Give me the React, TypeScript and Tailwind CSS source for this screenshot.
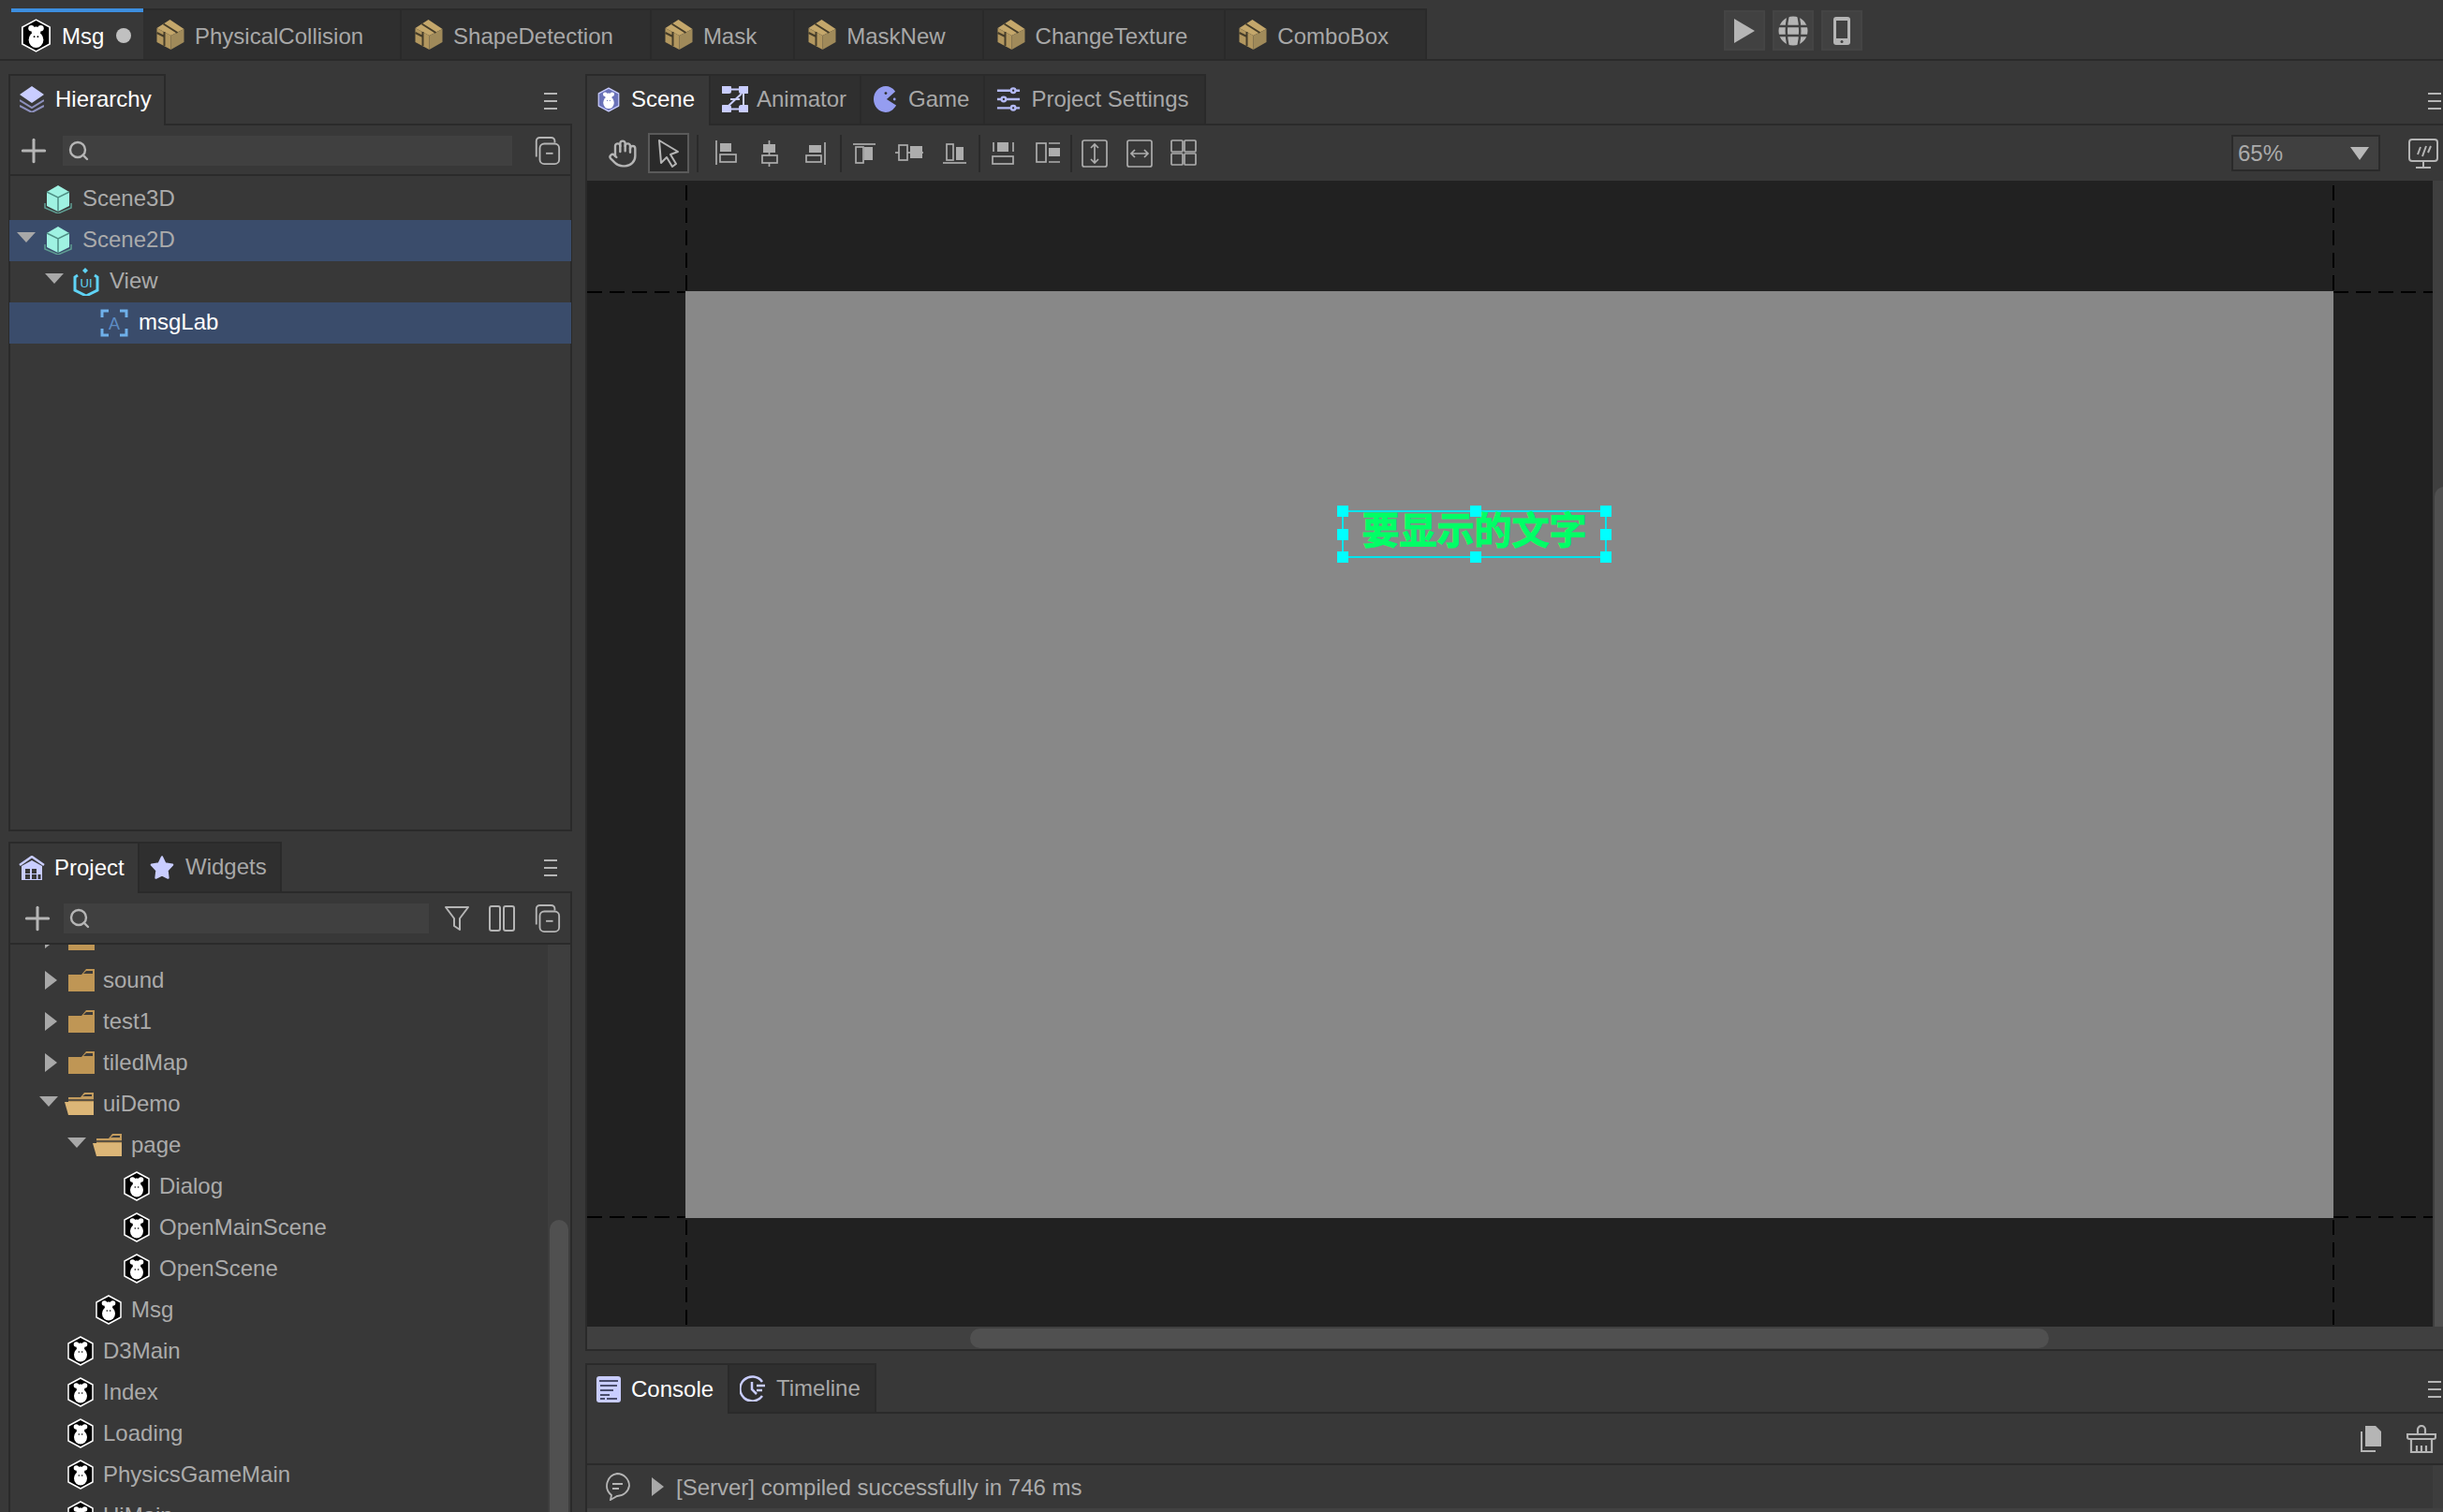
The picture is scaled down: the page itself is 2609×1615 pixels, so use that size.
import React from 'react';
import { Hand, Plus, Search } from 'lucide-react';

const ICON = '#b5b5b5';
const PERI = '#c9cdff';

const MonkeyHex = ({ w = 29, h = 32, fill = '#000', line = '#fff' }: { w?: number; h?: number; fill?: string; line?: string }) => (
  <svg width={w} height={h} viewBox="0 0 29 32" className="shrink-0">
    <path d="M14.5 1 27.5 8v16l-13 7-13-7V8z" fill={fill} stroke={line} strokeWidth="1.5" strokeLinejoin="round" />
    <circle cx="10" cy="9" r="2.8" fill="#fff" />
    <circle cx="19" cy="9" r="2.8" fill="#fff" />
    <circle cx="14.5" cy="12" r="4.4" fill="#fff" />
    <ellipse cx="14.5" cy="20" rx="7" ry="7.6" fill="#fff" />
    <circle cx="12.8" cy="17" r="0.8" fill={fill} />
    <circle cx="16.2" cy="17" r="0.8" fill={fill} />
  </svg>
);

const BoxIcon = () => (
  <svg width="30" height="32" viewBox="0 0 29 32" className="shrink-0">
    <path d="M0 9 14 0l15 10-14 7z" fill="#c4a76b" />
    <path d="M0 9l15 8v15L0 24z" fill="#b2975f" />
    <path d="M15 17l14-7v14l-14 8z" fill="#a08a5a" />
    <path d="M7 4.500l15 9.500M8 13v15M0 14l8 4" stroke="#453d2a" strokeWidth="2" fill="none" />
  </svg>
);

const CubeIcon = () => (
  <svg width="30" height="30" viewBox="0 0 30 30" className="shrink-0">
    <path d="M1 19v5l14 6 14-6v-5" fill="none" stroke="#5f9d92" strokeWidth="1.5" />
    <path d="M15 0 27 7v15l-12 6-12-6V7z" fill="#9ff2e2" />
    <path d="M3 7l12 6 12-6M15 13v15" fill="none" stroke="#4f8f85" strokeWidth="1.5" />
  </svg>
);

const UiIcon = () => (
  <svg width="28" height="30" viewBox="0 0 28 30" className="shrink-0">
    <path d="M13 0l3 3-3 3-3-3z" fill="#5fd3f5" />
    <path d="M5 8 2 10v14l12 6 12-6V10l-3-2" fill="none" stroke="#5fd3f5" strokeWidth="3" />
    <text x="14" y="21" textAnchor="middle" fontSize="13" fontFamily="Liberation Sans" fill="#5fd3f5">UI</text>
  </svg>
);

const LabelIcon = () => (
  <svg width="30" height="30" viewBox="0 0 30 30" className="shrink-0">
    <path d="M9 2H2v7M21 2h7v7M2 21v7h7M28 21v7h-7" fill="none" stroke="#6fb0ea" strokeWidth="3" />
    <text x="15" y="22" textAnchor="middle" fontSize="18" fontFamily="Liberation Sans" fill="#5d8cc4">A</text>
  </svg>
);

const FolderClosed = () => (
  <svg width="28" height="24" viewBox="0 0 28 24" className="shrink-0">
    <path d="M0 6h14l5-6h9v24H0z" fill="#bf9655" />
    <path d="M16 5l3-3h7v3z" fill="#3b3b3b" />
  </svg>
);

const FolderOpen = () => (
  <svg width="32" height="24" viewBox="0 0 32 24" className="shrink-0">
    <path d="M4 5h13l4-5h10v24H4z" fill="#c39c5e" />
    <path d="M19 4l3-2h7v2z" fill="#3b3b3b" />
    <path d="M0 10h31v14H4z" fill="#dcb677" />
    <path d="M3 8h28" stroke="#3b3b3b" strokeWidth="1.5" />
  </svg>
);

const Hamburger = () => (
  <svg width="14" height="18" viewBox="0 0 14 18" className="shrink-0">
    <path d="M0 1h14M0 9h14M0 17h14" stroke={ICON} strokeWidth="2.2" />
  </svg>
);

const CollapseIcon = () => (
  <svg width="30" height="30" viewBox="0 0 32 32" fill="none" stroke={ICON} strokeWidth="2">
    <path d="M4 23V5a4 4 0 0 1 4-4h13a4 4 0 0 1 4 4v2" />
    <rect x="8" y="8" width="22" height="23" rx="5" />
    <path d="M15 19h8" />
  </svg>
);

const Arrow = ({ down }: { down?: boolean }) =>
  down ? (
    <svg width="20" height="11" viewBox="0 0 20 11" className="shrink-0"><path d="M0 0h20L10 11z" fill="#a8a8a8" /></svg>
  ) : (
    <svg width="13" height="20" viewBox="0 0 13 20" className="shrink-0"><path d="M0 0l13 10L0 20z" fill="#a8a8a8" /></svg>
  );

const AlignIcon = ({ children, w = 30 }: { children: React.ReactNode; w?: number }) => (
  <svg width={w} height="30" viewBox="0 0 30 30" fill="none" stroke="#adadad" strokeWidth="1.7" className="shrink-0">
    {children}
  </svg>
);

const Sep = ({ className }: { className: string }) => <div className={`h-[40px] w-[2px] bg-[#2a2a2a] ${className}`} />;

const hierarchy = [
  { label: 'Scene3D', pad: 'pl-[37px]', icon: <CubeIcon /> },
  { label: 'Scene2D', pad: 'pl-[8px]', arrowGap: 'mr-[9px]', icon: <CubeIcon />, down: true, selected: true },
  { label: 'View', pad: 'pl-[38px]', arrowGap: 'mr-[10px]', icon: <UiIcon />, down: true },
  { label: 'msgLab', pad: 'pl-[97px]', icon: <LabelIcon />, selected: true, white: true },
];

const files = [
  { label: '', pad: 'pl-[37px]', icon: <FolderClosed />, arrow: true },
  { label: 'sound', pad: 'pl-[37px]', icon: <FolderClosed />, arrow: true },
  { label: 'test1', pad: 'pl-[37px]', icon: <FolderClosed />, arrow: true },
  { label: 'tiledMap', pad: 'pl-[37px]', icon: <FolderClosed />, arrow: true },
  { label: 'uiDemo', pad: 'pl-[31px]', icon: <FolderOpen />, down: true },
  { label: 'page', pad: 'pl-[61px]', icon: <FolderOpen />, down: true },
  { label: 'Dialog', pad: 'pl-[120px]', icon: <MonkeyHex w={30} /> },
  { label: 'OpenMainScene', pad: 'pl-[120px]', icon: <MonkeyHex w={30} /> },
  { label: 'OpenScene', pad: 'pl-[120px]', icon: <MonkeyHex w={30} /> },
  { label: 'Msg', pad: 'pl-[90px]', icon: <MonkeyHex w={30} /> },
  { label: 'D3Main', pad: 'pl-[60px]', icon: <MonkeyHex w={30} /> },
  { label: 'Index', pad: 'pl-[60px]', icon: <MonkeyHex w={30} /> },
  { label: 'Loading', pad: 'pl-[60px]', icon: <MonkeyHex w={30} /> },
  { label: 'PhysicsGameMain', pad: 'pl-[60px]', icon: <MonkeyHex w={30} /> },
  { label: 'UiMain', pad: 'pl-[60px]', icon: <MonkeyHex w={30} /> },
];

const docTabs = ['PhysicalCollision', 'ShapeDetection', 'Mask', 'MaskNew', 'ChangeTexture', 'ComboBox'];

const Handle = ({ className }: { className: string }) => <div className={`absolute h-[12px] w-[12px] bg-[#00ffff] ${className}`} />;

const App: React.FC = () => {
  return (
    <div className="flex h-[1615px] w-[2609px] flex-col overflow-hidden bg-[#383838] font-['Liberation_Sans',sans-serif] text-[24px] leading-none">
      {/* Document tabs */}
      <div className="flex h-[65px] shrink-0 border-b-2 border-[#2a2a2a] pt-[9px] pl-[12px]">
        <div className="flex h-full border-t-[4px] border-[#3d8fe0] pr-[2px]">
          <div className="flex w-[139px] items-center bg-[#383838] pl-[10px] text-white">
            <MonkeyHex w={33} h={36} />
            <span className="ml-[11px] pt-[2px]">Msg</span>
            <div className="ml-[13px] h-[16px] w-[16px] rounded-full bg-[#c0c0c0]" />
          </div>
        </div>
        {docTabs.map((t) => (
          <div key={t} className="flex h-full items-center gap-[11px] border-t-2 border-r-2 border-[#2a2a2a] bg-[#2f2f2f] pr-[39px] pl-[14px] text-[#a8a8a8]">
            <BoxIcon />
            <span className="pt-[3px]">{t}</span>
          </div>
        ))}
        <div className="ml-[317px] flex h-[43px] gap-[8px] pt-[2px]">
          <div className="flex h-[43px] w-[44px] items-center justify-center border-2 border-[#444444] bg-[#414141]">
            <svg width="22" height="26" viewBox="0 0 22 26"><path d="M0 0l22 13L0 26z" fill={ICON} /></svg>
          </div>
          <div className="flex h-[43px] w-[44px] items-center justify-center border-2 border-[#444444] bg-[#414141]">
            <svg width="32" height="32" viewBox="0 0 32 32">
              <circle cx="16" cy="16" r="15.5" fill={ICON} />
              <path d="M0 11h32M0 21h32M10.5 0Q7 16 10.5 32M21.5 0Q25 16 21.5 32" stroke="#414141" strokeWidth="2.4" fill="none" />
            </svg>
          </div>
          <div className="flex h-[43px] w-[44px] items-center justify-center border-2 border-[#444444] bg-[#414141]">
            <svg width="18" height="30" viewBox="0 0 18 30">
              <rect width="18" height="30" rx="3" fill={ICON} />
              <rect x="3" y="4" width="12" height="19" fill="#414141" />
              <circle cx="9" cy="26.5" r="1.5" fill="#414141" />
            </svg>
          </div>
        </div>
      </div>

      <div className="flex min-h-0 flex-1 pt-[14px] pl-[9px]">
        {/* Left column */}
        <div className="flex w-[602px] shrink-0 flex-col">
          <div className="flex h-[809px] shrink-0 flex-col">
            <div className="flex h-[55px] shrink-0 items-center border-b-2 border-[#2a2a2a]">
              <div className="relative -mb-[2px] flex h-[calc(100%+2px)] w-[168px] items-center gap-[12px] border-x-2 border-t-2 border-[#2a2a2a] bg-[#383838] pb-[3px] pl-[10px] text-white">
                <svg width="26" height="28" viewBox="0 0 26 28">
                  <path d="M13 0l13 9-13 9L0 9z" fill={PERI} />
                  <path d="M0 15l13 8 13-8M0 21l13 7 13-7" fill="none" stroke="#8d90bd" strokeWidth="2" />
                </svg>
                <span>Hierarchy</span>
              </div>
              <div className="mt-[4px] mr-[16px] ml-auto"><Hamburger /></div>
            </div>
            <div className="flex min-h-0 flex-1 flex-col border-x-2 border-b-2 border-[#2a2a2a]">
              <div className="flex h-[54px] shrink-0 items-center border-b-2 border-[#2a2a2a] pt-[2px]">
                <Plus size={40} color={ICON} strokeWidth={1.8} className="ml-[5px]" />
                <div className="ml-[11px] flex h-[32px] w-[480px] items-center bg-[#404040] pl-[5px]">
                  <Search size={24} color={ICON} strokeWidth={2.4} />
                </div>
                <div className="ml-[22px]"><CollapseIcon /></div>
              </div>
              <div className="-mx-px pt-[3px]">
                {hierarchy.map((r) => (
                  <div key={r.label} className={`flex h-[44px] items-center ${r.pad} ${r.selected ? 'bg-[#3a4c6b]' : ''}`}>
                    {r.down && <div className={`-mt-[8px] ${r.arrowGap}`}><Arrow down /></div>}
                    {r.icon}
                    <span className={`ml-[11px] pb-[2px] ${r.white ? 'text-white' : 'text-[#ababab]'}`}>{r.label}</span>
                  </div>
                ))}
              </div>
            </div>
          </div>

          <div className="mt-[11px] flex min-h-0 flex-1 flex-col">
            <div className="flex h-[55px] shrink-0 items-center border-b-2 border-[#2a2a2a]">
              <div className="relative -mb-[2px] flex h-[calc(100%+2px)] w-[140px] items-center gap-[10px] border-x-2 border-t-2 border-[#2a2a2a] bg-[#383838] pb-[2px] pl-[9px] text-white">
                <svg width="28" height="26" viewBox="0 0 28 26">
                  <path d="M1 10 14 1l13 9" fill="none" stroke={PERI} strokeWidth="2.5" />
                  <path d="M3 11 14 5l11 6v15H3z" fill={PERI} />
                  <path d="M7 14h5v5H7zM14 14h5v5h-5zM7 20h5v5H7zM14 20h5v5h-5zM20.500 20h3v5h-3z" fill="#383838" />
                </svg>
                <span>Project</span>
              </div>
              <div className="flex h-full w-[152px] items-center gap-[12px] border-t-2 border-r-2 border-[#2a2a2a] bg-[#2f2f2f] pb-[1px] pl-[11px] text-[#a8a8a8]">
                <svg width="26" height="25" viewBox="0 0 27 27">
                  <path d="M13.500 1.500l3.500 7.500 8.500 1.500-6 6.500 1 8.500-7-3.500-7 3.500 1-8.500-6-6.500 8.500-1.500z" fill={PERI} stroke={PERI} strokeWidth="2.500" strokeLinejoin="round" />
                </svg>
                <span>Widgets</span>
              </div>
              <div className="mt-[3px] mr-[16px] ml-auto"><Hamburger /></div>
            </div>
            <div className="flex min-h-0 flex-1 flex-col border-x-2 border-[#2a2a2a]">
              <div className="flex h-[55px] shrink-0 items-center border-b-2 border-[#2a2a2a]">
                <Plus size={40} color={ICON} strokeWidth={1.8} className="ml-[9px]" />
                <div className="ml-[8px] flex h-[32px] w-[390px] items-center bg-[#404040] pl-[5px]">
                  <Search size={24} color={ICON} strokeWidth={2.4} />
                </div>
                <svg width="26" height="26" viewBox="0 0 26 26" fill="none" stroke={ICON} strokeWidth="2" className="ml-[17px]">
                  <path d="M1 1h24l-9 12v12l-6-4v-8z" strokeLinejoin="round" />
                </svg>
                <svg width="28" height="28" viewBox="0 0 28 28" fill="none" stroke={ICON} strokeWidth="2" className="ml-[21px]">
                  <rect x="1" y="1" width="11" height="26" rx="2" />
                  <rect x="16" y="1" width="11" height="26" rx="2" />
                </svg>
                <div className="ml-[19px]"><CollapseIcon /></div>
              </div>
              <div className="relative min-h-0 flex-1 overflow-hidden">
                <div className="-mt-[28px]">
                  {files.map((r) => (
                    <div key={r.pad + r.label} className={`flex h-[44px] items-center ${r.pad}`}>
                      {r.arrow && <div className="mr-[12px]"><Arrow /></div>}
                      {r.down && <div className="-mt-[5px] mr-[7px]"><Arrow down /></div>}
                      {r.icon}
                      <span className="ml-[9px] text-[#ababab]">{r.label}</span>
                    </div>
                  ))}
                </div>
                <div className="absolute top-0 right-0 bottom-0 w-[24px] bg-[#3e3e3e]">
                  <div className="absolute top-[294px] right-[2px] bottom-0 left-[2px] rounded-t-[10px] bg-[#505050]" />
                </div>
              </div>
            </div>
          </div>
        </div>

        {/* Right column */}
        <div className="ml-[14px] flex min-w-0 flex-1 flex-col">
          <div className="flex h-[1364px] shrink-0 flex-col">
            <div className="flex h-[55px] shrink-0 items-center border-b-2 border-[#2a2a2a]">
              <div className="relative -mb-[2px] flex h-[calc(100%+2px)] w-[134px] items-center gap-[12px] border-x-2 border-t-2 border-[#2a2a2a] bg-[#383838] pb-[3px] pl-[11px] text-white">
                <MonkeyHex w={24} h={29} fill="#6a72b8" line="#c9cdff" />
                <span>Scene</span>
              </div>
              <div className="flex h-full items-center gap-[9px] border-t-2 border-r-2 border-[#2a2a2a] bg-[#2f2f2f] pr-[14px] pb-[2px] pl-[12px] text-[#a8a8a8]">
                <svg width="28" height="28" viewBox="0 0 28 28" fill="none" stroke={PERI} strokeWidth="2">
                  <rect x="0" y="0" width="9" height="7" rx="1.500" fill={PERI} />
                  <rect x="19" y="0" width="9" height="7" rx="1.500" fill={PERI} />
                  <rect x="0" y="21" width="9" height="7" rx="1.500" fill={PERI} />
                  <rect x="19" y="21" width="9" height="7" rx="1.500" fill={PERI} />
                  <path d="M9 3.500h10M23 7v14M19 24.500H9M21 8 7 21M9 14h10" />
                </svg>
                <span>Animator</span>
              </div>
              <div className="flex h-full items-center gap-[12px] border-t-2 border-r-2 border-[#2a2a2a] bg-[#2f2f2f] pr-[15px] pb-[2px] pl-[13px] text-[#a8a8a8]">
                <svg width="25" height="28" viewBox="0 0 27 30">
                  <path d="M14 0C6 0 0 7 0 15s6 15 14 15c5 0 9-3 12-8L15 15 25 6C22 2 18 0 14 0z" fill="#959df0" />
                  <circle cx="14" cy="8" r="1.500" fill="#2f2f2f" />
                  <circle cx="24" cy="15" r="1.500" fill="#959df0" />
                </svg>
                <span>Game</span>
              </div>
              <div className="flex h-full items-center gap-[11px] border-t-2 border-r-2 border-[#2a2a2a] bg-[#2f2f2f] pr-[16px] pb-[2px] pl-[12px] text-[#a8a8a8]">
                <svg width="26" height="26" viewBox="0 0 26 28" fill="none" stroke="#b4b9f5" strokeWidth="2.5">
                  <path d="M0 4h16M21 4h5M0 14h5M10 14h16M0 24h16M21 24h5" />
                  <circle cx="18.500" cy="4" r="2.500" />
                  <circle cx="7.500" cy="14" r="2.500" />
                  <circle cx="18.500" cy="24" r="2.500" />
                </svg>
                <span>Project Settings</span>
              </div>
              <div className="mt-[4px] mr-[2px] ml-auto"><Hamburger /></div>
            </div>

            <div className="flex min-h-0 flex-1 flex-col border-b-2 border-l-2 border-[#2a2a2a]">
              {/* Scene toolbar */}
              <div className="flex h-[59px] shrink-0 items-center pl-[22px]">
                <Hand size={32} color={ICON} strokeWidth={1.8} />
                <div className="ml-[11px] flex h-[43px] w-[44px] items-center justify-center border-2 border-[#5a5a5a] bg-[#2a2a2a]">
                  <svg width="22" height="30" viewBox="0 0 22 30" fill="none" stroke={ICON} strokeWidth="2" strokeLinejoin="round">
                    <path d="M1 1l2 24 6-6 6 10 4-3-6-10 8-3z" />
                  </svg>
                </div>
                <Sep className="ml-[8px] mr-[14px]" />
                <div className="flex items-center gap-[18px]">
                  <AlignIcon><path d="M5 1v26" /><rect x="9" y="4" width="12" height="9" fill="#adadad" stroke="none" /><rect x="9" y="16" width="17" height="8" /></AlignIcon>
                  <AlignIcon><path d="M13.500 1v28" /><rect x="7" y="5" width="13" height="9" fill="#adadad" stroke="none" /><rect x="6" y="17" width="16" height="8" fill="#383838" /></AlignIcon>
                  <AlignIcon><path d="M25 3v24" /><rect x="8" y="6" width="13" height="8" fill="#adadad" stroke="none" /><rect x="5" y="17" width="16" height="7" /></AlignIcon>
                </div>
                <Sep className="ml-[11px] mr-[9px]" />
                <div className="flex items-center gap-[18px]">
                  <AlignIcon><path d="M3 5h24" /><rect x="6" y="8" width="8" height="17" /><rect x="15" y="8" width="9" height="14" fill="#adadad" stroke="none" /></AlignIcon>
                  <AlignIcon><path d="M0 14h30" /><rect x="4" y="6" width="9" height="16" fill="#383838" /><rect x="16" y="7" width="13" height="13" fill="#adadad" stroke="none" /></AlignIcon>
                  <AlignIcon><path d="M3 25h25" /><rect x="7" y="5" width="7" height="17" /><rect x="17" y="8" width="8" height="14" fill="#adadad" stroke="none" /></AlignIcon>
                </div>
                <Sep className="ml-[11px] mr-[9px]" />
                <div className="flex items-center gap-[18px]">
                  <AlignIcon><path d="M5 3v10M26 3v10" /><rect x="9" y="3" width="12" height="10" fill="#adadad" stroke="none" /><rect x="4" y="18" width="22" height="8" /></AlignIcon>
                  <AlignIcon><path d="M16 4h12M16 24h12" /><rect x="16" y="9" width="12" height="9" fill="#adadad" stroke="none" /><rect x="3" y="4" width="10" height="20" /></AlignIcon>
                </div>
                <Sep className="ml-[9px] mr-[9px]" />
                <div className="flex items-center gap-[18px]">
                  <AlignIcon><rect x="2" y="1" width="26" height="28" rx="2" /><path d="M15 5v20M11 9l4-4 4 4M11 21l4 4 4-4" /></AlignIcon>
                  <AlignIcon><rect x="2" y="1" width="26" height="28" rx="2" /><path d="M6 15h18M10 11l-4 4 4 4M20 11l4 4-4 4" /></AlignIcon>
                  <AlignIcon>
                    <rect x="1" y="1" width="12" height="12" rx="1" />
                    <rect x="15" y="1" width="12" height="12" rx="1" />
                    <rect x="1" y="15" width="12" height="12" rx="1" />
                    <rect x="15" y="15" width="12" height="12" rx="1" />
                  </AlignIcon>
                </div>
                <div className="ml-auto flex h-[39px] w-[159px] items-center justify-between border-2 border-[#2a2a2a] bg-[#404040] pr-[10px] pl-[5px] text-[#ababab]">
                  <span>65%</span>
                  <svg width="20" height="14" viewBox="0 0 20 14"><path d="M0 0h20L10 14z" fill="#b8b8b8" /></svg>
                </div>
                <svg width="32" height="32" viewBox="0 0 32 32" fill="none" stroke={ICON} strokeWidth="2" className="mr-[5px] ml-[30px]">
                  <rect x="1" y="1" width="30" height="23" rx="3" />
                  <path d="M16 24v6M8 31h16M10 17l3-8M15 19l4-11M21 15l3-7" />
                </svg>
              </div>

              {/* Canvas */}
              <div className="flex min-h-0 flex-1">
                <div className="relative min-w-0 flex-1 overflow-hidden bg-[#212121]">
                  <div className="absolute top-[118px] left-[105px] h-[990px] w-[1760px] bg-[#888888]" />
                  <div className="absolute top-[5px] left-[105px] h-[113px] w-[2px] bg-[repeating-linear-gradient(to_bottom,#000_0_16px,transparent_16px_24px)]" />
                  <div className="absolute top-[1110px] left-[105px] h-[114px] w-[2px] bg-[repeating-linear-gradient(to_bottom,#000_0_16px,transparent_16px_24px)]" />
                  <div className="absolute top-[5px] left-[1864px] h-[113px] w-[2px] bg-[repeating-linear-gradient(to_bottom,#000_0_16px,transparent_16px_24px)]" />
                  <div className="absolute top-[1110px] left-[1864px] h-[112px] w-[2px] bg-[repeating-linear-gradient(to_bottom,#000_0_16px,transparent_16px_24px)]" />
                  <div className="absolute top-[118px] left-0 h-[2px] w-[105px] bg-[repeating-linear-gradient(to_right,#000_0_16px,transparent_16px_24px)]" />
                  <div className="absolute top-[1106px] left-0 h-[2px] w-[105px] bg-[repeating-linear-gradient(to_right,#000_0_16px,transparent_16px_24px)]" />
                  <div className="absolute top-[118px] left-[1865px] h-[2px] w-[106px] bg-[repeating-linear-gradient(to_right,#000_0_16px,transparent_16px_24px)]" />
                  <div className="absolute top-[1106px] left-[1865px] h-[2px] w-[106px] bg-[repeating-linear-gradient(to_right,#000_0_16px,transparent_16px_24px)]" />

                  <div className="absolute top-[352px] left-[806px] flex h-[51px] w-[283px] justify-center border-2 border-[#00e5ee]">
                    <span className="font-['Noto_Sans_CJK_SC',sans-serif] text-[40px] leading-[34px] font-bold text-[#00ff66] [-webkit-text-stroke:1px_#00ff66]">要显示的文字</span>
                    <Handle className="-top-[7px] -left-[7px]" />
                    <Handle className="-top-[7px] left-[135px]" />
                    <Handle className="-top-[7px] -right-[7px]" />
                    <Handle className="top-[18px] -left-[7px]" />
                    <Handle className="top-[18px] -right-[7px]" />
                    <Handle className="-bottom-[7px] -left-[7px]" />
                    <Handle className="-bottom-[7px] left-[135px]" />
                    <Handle className="-bottom-[7px] -right-[7px]" />
                  </div>
                </div>
                {/* Vertical scrollbar, its thumb runs off the window edge */}
                <div className="relative w-[11px] shrink-0 bg-[#3f3f3f]">
                  <div className="absolute top-[327px] bottom-0 left-[2px] w-[20px] rounded-t-[10px] bg-[#505050]" />
                </div>
              </div>
              <div className="flex h-[24px] shrink-0 items-center bg-[#404040] pl-[409px]">
                <div className="h-[21px] w-[1152px] rounded-full bg-[#505050]" />
              </div>
            </div>
          </div>

          {/* Console */}
          <div className="mt-[13px] flex min-h-0 flex-1 flex-col">
            <div className="flex h-[54px] shrink-0 items-center border-b-2 border-[#2a2a2a]">
              <div className="relative -mb-[2px] flex h-[calc(100%+2px)] w-[154px] items-center gap-[11px] border-x-2 border-t-2 border-[#2a2a2a] bg-[#383838] pl-[10px] text-white">
                <svg width="26" height="28" viewBox="0 0 26 28">
                  <rect width="26" height="28" rx="3" fill={PERI} />
                  <path d="M3 5h20M4 10h18M4 15h14M4 20h10M4 24h5M11 24h11" stroke="#4a4d6b" strokeWidth="2" />
                </svg>
                <span>Console</span>
              </div>
              <div className="flex h-full w-[157px] items-center gap-[11px] border-t-2 border-r-2 border-[#2a2a2a] bg-[#2f2f2f] pl-[11px] text-[#a8a8a8]">
                <svg width="28" height="28" viewBox="0 0 28 28" fill="none" stroke={PERI} strokeWidth="2.5">
                  <path d="M24 7A13 13 0 1 0 24 22" />
                  <path d="M13 7v8l5 5M18 11h9M18 16h6" />
                </svg>
                <span>Timeline</span>
              </div>
              <div className="mt-[3px] mr-[2px] ml-auto"><Hamburger /></div>
            </div>
            <div className="flex min-h-0 flex-1 flex-col border-l-2 border-[#2a2a2a]">
              <div className="flex h-[55px] shrink-0 items-center justify-end border-b-2 border-[#2a2a2a] pt-[1px] pr-[7px]">
                <svg width="22" height="28" viewBox="0 0 22 28" fill={ICON} className="mr-[27px]">
                  <path d="M5 0h11l6 6v16H5z" />
                  <path d="M1 6v21h15" fill="none" stroke={ICON} strokeWidth="2" />
                </svg>
                <svg width="32" height="30" viewBox="0 0 32 30" fill="none" stroke={ICON} strokeWidth="2.2">
                  <path d="M12 10V5a4 4 0 0 1 8 0v5" />
                  <path d="M1 10h30v3a2 2 0 0 1-2 2H3a2 2 0 0 1-2-2z" />
                  <path d="M5 15v14h22V15M11 22v7M16 22v7M21 22v7" />
                </svg>
              </div>
              <div className="flex h-[46px] shrink-0 items-center pl-[17px] text-[#ababab]">
                <svg width="30" height="30" viewBox="0 0 30 30" fill="none" stroke={ICON} strokeWidth="1.8">
                  <path d="M15 1a13 13 0 0 1 13 13 13 13 0 0 1-13 11l-7 4 1-5A13 13 0 0 1 15 1z" />
                  <path d="M10 12h11M10 17h7" />
                </svg>
                <div className="mr-[13px] ml-[22px]"><Arrow /></div>
                <span className="pt-[2px]">[Server] compiled successfully in 746 ms</span>
                <div className="ml-auto w-[11px] self-stretch bg-[#3d3d3d]" />
              </div>
              <div className="h-[4px] bg-[#414141]" />
            </div>
          </div>
        </div>
      </div>
    </div>
  );
};

export default App;
